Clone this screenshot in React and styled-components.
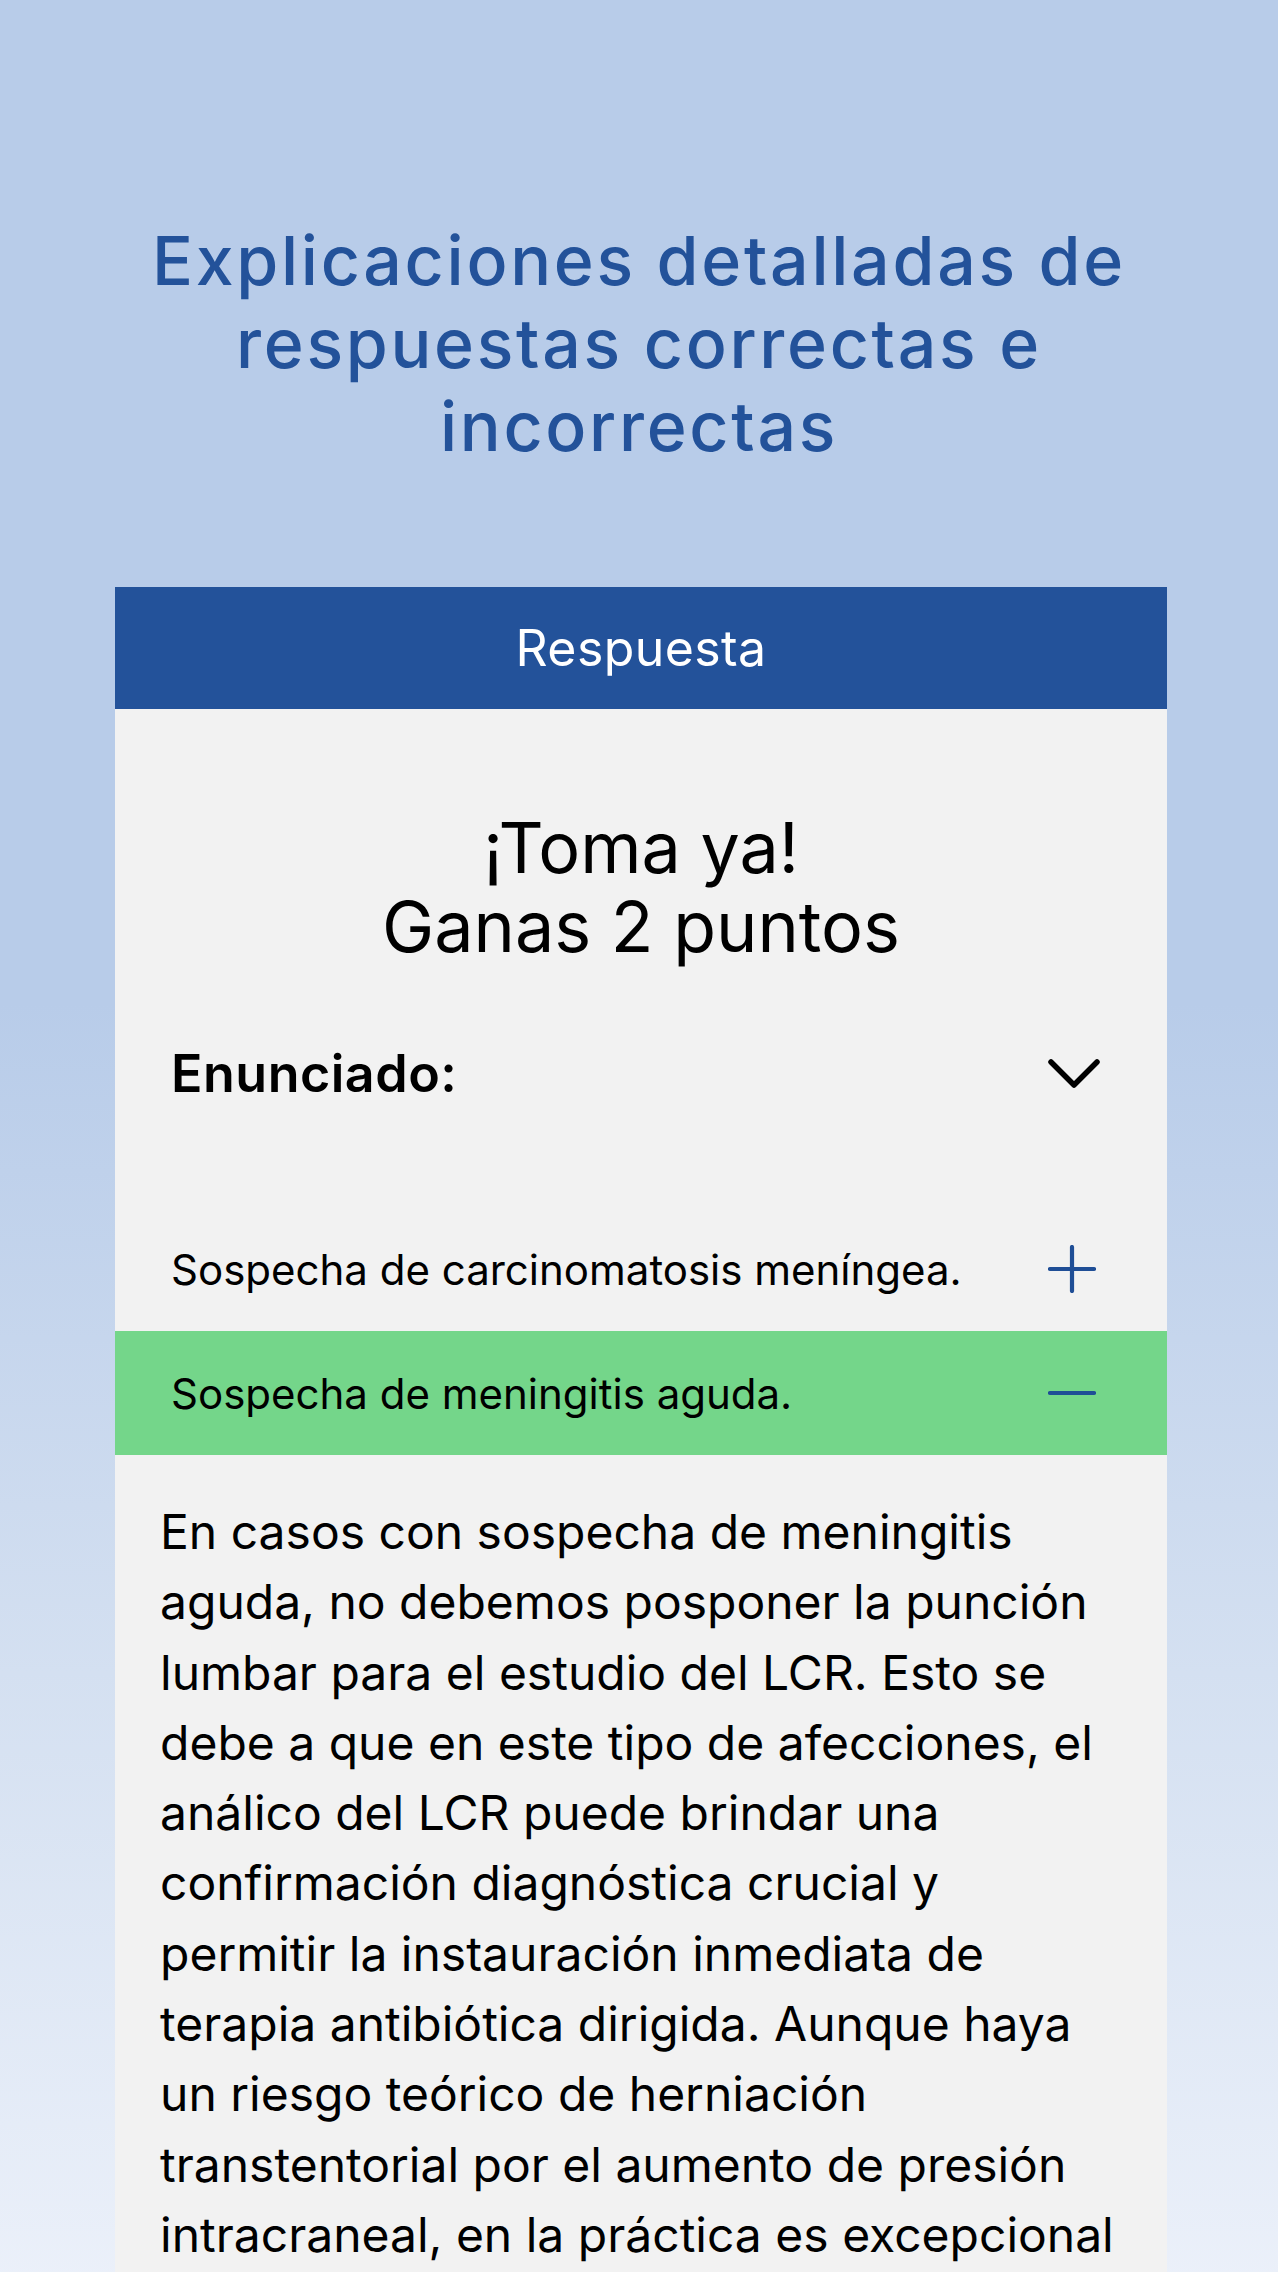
import React from "react";
import styled, { createGlobalStyle } from "styled-components";

const GlobalStyle = createGlobalStyle`
  html, body { margin: 0; padding: 0; }
  body {
    font-family: "Inter", "Noto Sans", sans-serif;
    color: #000;
    background: #eef2fa;
  }
  * { box-sizing: border-box; }
`;

const Page = styled.div`
  min-height: 2272px;
  overflow: hidden;
  background: linear-gradient(180deg, #b8cce9 0%, #b8cce9 42%, #d4e0f1 70%, #eff3fb 100%);
  padding-top: 219px;
`;

const Title = styled.h1`
  margin: 0;
  text-align: center;
  font-family: "Inter", sans-serif;
  font-weight: 500;
  font-size: 68px;
  line-height: 83px;
  letter-spacing: 2.7px;
  color: #23529a;
  white-space: pre;
`;

const Card = styled.section`
  margin: 119px 0 0 115px;
  width: 1052px;
  background: #f2f2f2;
  padding-bottom: 120px;
`;

const CardHeader = styled.div`
  height: 122px;
  background: #23529a;
  display: flex;
  align-items: center;
  justify-content: center;
  color: #fff;
  font-size: 50px;
  letter-spacing: 0.4px;
`;

const Result = styled.div`
  padding: 99px 0 8px;
  text-align: center;
  font-size: 70px;
  line-height: 79px;
  white-space: pre;
`;

const StatementRow = styled.div`
  height: 233px;
  padding: 42px 67px 0 56px;
  display: flex;
  justify-content: space-between;
  align-items: flex-start;
`;

const StatementLabel = styled.span`
  font-size: 52px;
  line-height: 64px;
  font-weight: 600;
  letter-spacing: 0.5px;
  padding-top: 26px;
`;

const IconBox = styled.span`
  display: flex;
  align-items: center;
  justify-content: center;
  width: 52px;
  height: ${(p) => p.$h || 52}px;
  flex: none;
`;

const Option = styled.div`
  height: 124px;
  padding: 0 69px 0 56px;
  display: flex;
  align-items: center;
  justify-content: space-between;
  background: ${(p) => (p.$selected ? "#74d68a" : "transparent")};
`;

const OptionText = styled.span`
  font-size: 42px;
  white-space: nowrap;
`;

const Explanation = styled.p`
  margin: 0;
  padding: 42px 40px 0 45px;
  font-size: 48px;
  line-height: 70.3px;
  white-space: pre;
`;

const Chevron = () => (
  <svg width="52" height="32" viewBox="0 0 52 32" fill="none">
    <polyline
      points="3,4 26,27 49,4"
      stroke="#000"
      strokeWidth="5.5"
      strokeLinecap="round"
      strokeLinejoin="round"
    />
  </svg>
);

const Plus = () => (
  <svg width="48" height="48" viewBox="0 0 48 48" fill="none">
    <line x1="2" y1="24" x2="46" y2="24" stroke="#1f4e96" strokeWidth="4.2" strokeLinecap="round" />
    <line x1="24" y1="2" x2="24" y2="46" stroke="#1f4e96" strokeWidth="4.2" strokeLinecap="round" />
  </svg>
);

const Minus = () => (
  <svg width="48" height="48" viewBox="0 0 48 48" fill="none">
    <line x1="2" y1="24" x2="46" y2="24" stroke="#1f4e96" strokeWidth="4.2" strokeLinecap="round" />
  </svg>
);

const explanation = [
  "En casos con sospecha de meningitis",
  "aguda, no debemos posponer la punción",
  "lumbar para el estudio del LCR. Esto se",
  "debe a que en este tipo de afecciones, el",
  "análico del LCR puede brindar una",
  "confirmación diagnóstica crucial y",
  "permitir la instauración inmediata de",
  "terapia antibiótica dirigida. Aunque haya",
  "un riesgo teórico de herniación",
  "transtentorial por el aumento de presión",
  "intracraneal, en la práctica es excepcional",
].join("\n");

export default function App() {
  return (
    <>
      <GlobalStyle />
      <Page>
        <Title>{"Explicaciones detalladas de\nrespuestas correctas e\nincorrectas"}</Title>
        <Card>
          <CardHeader>Respuesta</CardHeader>
          <Result>{"¡Toma ya!\nGanas 2 puntos"}</Result>
          <StatementRow>
            <StatementLabel>Enunciado:</StatementLabel>
            <IconBox $h={116}>
              <Chevron />
            </IconBox>
          </StatementRow>
          <Option>
            <OptionText>Sospecha de carcinomatosis meníngea.</OptionText>
            <IconBox>
              <Plus />
            </IconBox>
          </Option>
          <Option $selected>
            <OptionText>Sospecha de meningitis aguda.</OptionText>
            <IconBox>
              <Minus />
            </IconBox>
          </Option>
          <Explanation>{explanation}</Explanation>
        </Card>
      </Page>
    </>
  );
}
